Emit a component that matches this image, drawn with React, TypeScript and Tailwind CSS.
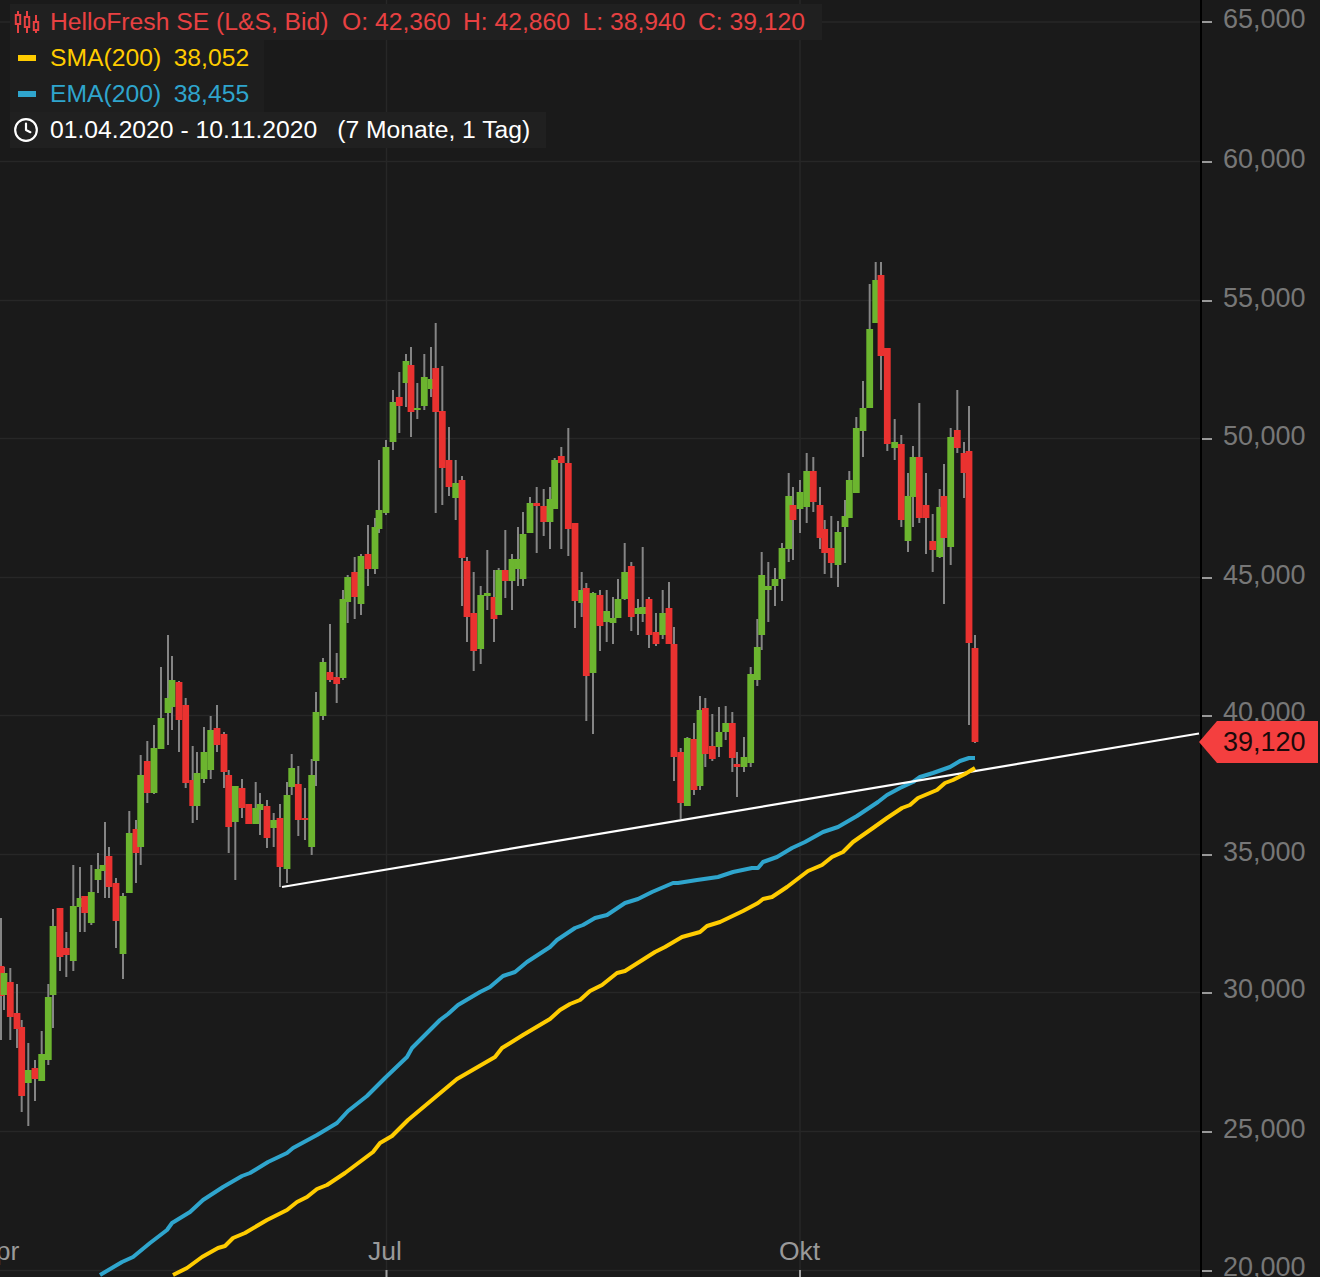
import { Clock } from "lucide-react";

type C = [number, number, number, number, number, "r" | "g", number?];

const candles: C[] = [
  [1, 918, 1040, 966, 996, "r"], [4, 967, 1010, 973, 995, "g"], [10.3, 968, 1040, 982, 1017, "r"], [17, 984, 1048, 1013, 1029, "r"],
  [21.7, 1020, 1112, 1027, 1096, "r"], [28.3, 1043, 1126, 1070, 1083, "g"], [35, 1060, 1101, 1068, 1079, "r"], [41.7, 1031, 1081, 1054, 1081, "g"],
  [48.3, 984, 1065, 997, 1060, "g"], [53, 909, 1028, 926, 995, "g"], [60, 908, 971, 908, 957, "r"], [66.3, 932, 977, 948, 955, "r"],
  [73.3, 865, 971, 906, 961, "g"], [80, 867, 932, 898, 907, "g"], [84.7, 896, 932, 896, 913, "r"], [91.3, 865, 925, 892, 923, "g"],
  [98, 853, 893, 869, 880, "g"], [103, 822, 898, 865, 871, "g", 105], [109, 847, 898, 856, 887, "r"], [116, 878, 948, 883, 921, "r"],
  [123, 893, 979, 896, 954, "g"], [129.3, 811, 893, 833, 893, "g"], [136, 820, 883, 829, 853, "r"], [140.7, 755, 865, 775, 847, "g"],
  [147.3, 741, 803, 761, 793, "r"], [154, 725, 794, 748, 793, "g"], [161, 667, 749, 718, 749, "g"], [168, 635, 745, 698, 713, "g"],
  [172, 656, 730, 680, 707, "g"], [179, 681, 752, 682, 720, "r"], [185.7, 698, 788, 705, 783, "r"], [192.7, 746, 823, 780, 806, "r"],
  [197, 752, 820, 773, 806, "g"], [204, 727, 783, 752, 779, "g"], [210.7, 716, 779, 730, 770, "g"], [217, 705, 752, 728, 745, "r"],
  [224, 732, 788, 734, 772, "r"], [228.7, 770, 853, 775, 827, "r"], [235.3, 786, 880, 786, 822, "g"], [242, 779, 818, 788, 808, "r"],
  [248.7, 804, 824, 804, 824, "r"], [255.7, 782, 824, 808, 824, "g"], [260, 793, 835, 804, 810, "g"], [267, 800, 848, 806, 838, "r"],
  [273.7, 813, 847, 820, 828, "g"], [280, 804, 887, 818, 867, "r"], [287, 782, 883, 795, 869, "g"], [291.7, 754, 795, 768, 787, "g"],
  [298.3, 766, 836, 784, 820, "r"], [305, 788, 840, 818, 820, "r"], [311.7, 759, 855, 775, 847, "g"], [316, 692, 786, 712, 761, "g"],
  [323, 658, 720, 662, 716, "g"], [330, 624, 682, 672, 680, "r"], [336.7, 653, 703, 677, 684, "r"], [343, 590, 680, 599, 678, "g"],
  [347.7, 575, 623, 577, 602, "g"], [354.7, 557, 619, 572, 597, "r"], [361, 554, 615, 556, 604, "g"], [368, 525, 586, 554, 569, "r"],
  [375, 518, 574, 527, 569, "g"], [379, 460, 533, 510, 529, "g"], [386, 440, 515, 447, 513, "g"], [393, 390, 450, 402, 442, "g"],
  [399.3, 372, 433, 397, 406, "r"], [406, 354, 407, 361, 383, "g"], [411, 347, 437, 365, 412, "r"], [417.3, 383, 419, 408, 410, "g"],
  [424.3, 354, 410, 377, 406, "g"], [431, 347, 397, 379, 389, "g"], [435.7, 323, 513, 368, 412, "r"], [442.3, 366, 505, 411, 468, "r"],
  [449, 427, 496, 460, 487, "r"], [455.7, 460, 520, 483, 498, "g"], [462, 476, 606, 480, 558, "r"], [467, 557, 642, 561, 617, "r"],
  [473.7, 572, 671, 613, 651, "r"], [480.7, 586, 664, 595, 649, "g"], [487.3, 550, 610, 593, 596, "g"], [494, 570, 642, 597, 619, "r"],
  [498.7, 568, 615, 570, 615, "g"], [505.3, 530, 598, 570, 581, "r"], [512, 554, 610, 559, 581, "g"], [518, 527, 586, 559, 569, "g"],
  [523, 512, 586, 534, 579, "g"], [530, 497, 533, 503, 533, "g"], [536.7, 487, 553, 503, 506, "r"], [543.7, 489, 536, 506, 522, "r"],
  [550, 487, 549, 499, 522, "g"], [554.7, 458, 509, 460, 509, "g"], [561.3, 447, 549, 456, 463, "r"], [568.3, 428, 556, 463, 529, "r"],
  [575, 523, 628, 523, 601, "r"], [581.7, 572, 617, 590, 603, "g"], [586.3, 583, 721, 588, 676, "r"], [593, 592, 734, 593, 673, "g"],
  [600, 590, 651, 595, 626, "r"], [606.7, 590, 642, 611, 622, "g"], [613, 597, 644, 618, 623, "g"], [618, 579, 618, 599, 618, "g"],
  [624.7, 543, 600, 572, 599, "g"], [631.3, 562, 631, 566, 617, "r"], [638, 599, 635, 608, 614, "g"], [642.7, 547, 622, 607, 614, "g"],
  [649, 597, 648, 599, 635, "r"], [656, 613, 646, 632, 644, "r"], [662.7, 590, 639, 613, 635, "g"], [669, 582, 644, 608, 644, "r"],
  [674, 627, 781, 644, 757, "r"], [680.7, 748, 819, 752, 803, "r"], [687.3, 737, 806, 738, 806, "g"], [694, 723, 795, 739, 790, "r"],
  [700, 696, 790, 710, 786, "g"], [705.3, 698, 767, 708, 754, "r"], [712.3, 714, 761, 746, 759, "r"], [719, 707, 757, 732, 747, "g"],
  [725.7, 706, 740, 723, 732, "g"], [732.3, 712, 772, 723, 758, "r"], [737, 752, 797, 764, 767, "r"], [744, 737, 772, 757, 767, "g"],
  [750.7, 667, 767, 674, 763, "g"], [757.3, 619, 686, 647, 680, "g"], [761.7, 552, 650, 575, 635, "g"], [768.3, 562, 622, 586, 590, "g"],
  [775, 568, 606, 579, 586, "g"], [782, 543, 601, 548, 579, "g"], [788.7, 473, 562, 496, 549, "g"], [793, 487, 560, 505, 520, "r"],
  [800, 480, 533, 492, 509, "g"], [806.7, 453, 523, 471, 507, "g"], [813.3, 457, 512, 471, 502, "r"], [820, 487, 549, 505, 538, "r"],
  [824.7, 520, 574, 529, 553, "r"], [831.3, 516, 578, 548, 563, "r"], [838, 521, 587, 532, 565, "g"], [845, 500, 563, 516, 527, "g"],
  [849.3, 471, 518, 480, 518, "g"], [856.3, 417, 493, 428, 493, "g"], [863, 381, 457, 408, 431, "g"], [869.7, 284, 408, 329, 408, "g"],
  [875.7, 262, 323, 280, 323, "g"], [881, 262, 390, 275, 356, "r"], [887.3, 348, 451, 348, 444, "r"], [894.7, 419, 460, 442, 448, "g"],
  [901.3, 435, 527, 444, 520, "r"], [908, 473, 552, 496, 541, "g"], [913, 446, 527, 457, 497, "g"], [919.3, 403, 523, 457, 518, "r"],
  [926, 473, 554, 505, 518, "r"], [932.7, 514, 572, 541, 550, "r"], [939.7, 489, 558, 507, 557, "g"], [944, 464, 604, 496, 538, "r"],
  [950.7, 428, 565, 437, 547, "g"], [957.3, 390, 453, 430, 448, "r"], [964, 442, 498, 453, 473, "r"], [969, 406, 725, 451, 643, "r"],
  [975, 635, 743, 648, 742, "r"],
];

const ema =
  "100,1275 122,1262 133,1257 150,1243 167,1230 172,1223 190,1212 203,1200 223,1187 242,1176 250,1173 268,1162 287,1153 293,1148 317,1135 337,1123 348,1111 367,1096 385,1078 407,1057 412,1048 440,1020 448,1014 458,1005 480,992 490,987 503,976 515,972 527,962 550,947 557,940 575,928 583,925 595,918 607,915 625,903 638,899 652,892 673,883 678,883 697,880 718,877 733,872 752,868 758,868 763,862 777,857 792,848 805,842 823,832 838,827 857,816 878,802 887,795 900,788 913,782 920,777 933,773 950,767 960,761 969,758 975,758";
const sma =
  "173,1275 187,1268 202,1257 218,1248 225,1246 233,1238 245,1233 267,1220 287,1210 297,1202 307,1197 317,1189 327,1185 345,1173 373,1152 380,1143 392,1136 408,1120 457,1079 495,1057 502,1048 523,1035 550,1019 560,1010 570,1004 580,1000 590,991 602,985 617,973 625,971 655,952 665,947 682,937 700,932 707,926 720,922 743,911 758,903 763,899 772,897 787,887 808,871 822,865 832,857 843,852 853,842 873,828 887,818 902,808 910,805 918,798 937,790 945,783 953,780 965,774 975,768";

const gridY = [22, 161.5, 300.5, 438.5, 577.5, 715.5, 854.5, 992.5, 1131.5, 1270.5];
const axis: [string, number][] = [
  ["65,000", 3], ["60,000", 3], ["55,000", 3], ["50,000", 3], ["45,000", 3], ["40,000", 4], ["35,000", 3], ["30,000", 4], ["25,000", 3], ["20,000", 4],
];

function CandleIcon() {
  return (
    <svg width="26" height="26" viewBox="0 0 26 26" fill="none" stroke="currentColor" strokeWidth="2">
      <path d="M4 2v4M4 15v9M13 2v6M13 18v6M22 6v7M22 21v3" />
      <rect x="1.8" y="6" width="4.4" height="9" />
      <rect x="10.8" y="8" width="4.4" height="10" />
      <rect x="19.8" y="13" width="4.4" height="8" />
    </svg>
  );
}

export default function App() {
  return (
    <div className="relative flex h-[1277px] w-[1320px] overflow-hidden bg-[#1a1a1a] font-['Liberation_Sans',Arial,sans-serif]">
      <div className="relative h-full w-[1200px] shrink-0 overflow-hidden">
        <svg width="1200" height="1277" viewBox="0 0 1200 1277" className="block">
          {gridY.map((y) => (
            <line key={y} x1="0" x2="1200" y1={y} y2={y} stroke="#272727" strokeWidth="1.5" />
          ))}
          <line x1="386.5" x2="386.5" y1="0" y2="1277" stroke="#272727" strokeWidth="1.5" />
          <line x1="800" x2="800" y1="0" y2="1277" stroke="#272727" strokeWidth="1.5" />
          <line x1="386.5" x2="386.5" y1="1270" y2="1277" stroke="#a0a0a0" strokeWidth="2" />
          <line x1="800" x2="800" y1="1270" y2="1277" stroke="#a0a0a0" strokeWidth="2" />
          {candles.map((c, i) => (
            <line key={i} x1={c[6] ?? c[0]} x2={c[6] ?? c[0]} y1={c[1]} y2={c[2]} stroke="#858585" strokeWidth="2" />
          ))}
          {candles.map((c, i) => (
            <rect key={i} x={c[0] - 3.4} y={c[3]} width="6.8" height={c[4] - c[3]} fill={c[5] === "r" ? "#ea3230" : "#6cb52f"} />
          ))}
          <polyline points={ema} fill="none" stroke="#2fa5cd" strokeWidth="4" strokeLinejoin="round" />
          <line x1="282" y1="887" x2="1199" y2="733.5" stroke="#ffffff" strokeWidth="2.2" />
          <polyline points={sma} fill="none" stroke="#ffcc00" strokeWidth="4" strokeLinejoin="round" />
        </svg>

        <div className="absolute left-[10px] top-[4px] flex flex-col items-start text-[24.7px] leading-[36px]">
          <div className="flex w-[812px] items-center bg-[#202020] text-[#e84142]">
            <span className="flex w-[40px] justify-center pr-[6px]"><CandleIcon /></span>
            <span className="mr-[13.5px]">HelloFresh SE (L&amp;S, Bid)</span>
            <span className="mr-[12.5px]">O: 42,360</span>
            <span className="mr-[12.5px]">H: 42,860</span>
            <span className="mr-[12.5px]">L: 38,940</span>
            <span>C: 39,120</span>
          </div>
          <div className="flex w-[254px] items-center bg-[#1e1e1e] text-[#ffcc00]">
            <span className="flex w-[40px] justify-end pr-[14px]"><span className="h-[6px] w-[18px] bg-[#ffcc00]" /></span>
            <span className="mr-[12.5px]">SMA(200)</span>
            <span>38,052</span>
          </div>
          <div className="flex w-[254px] items-center bg-[#1e1e1e] text-[#2fa5cd]">
            <span className="flex w-[40px] justify-end pr-[14px]"><span className="h-[6px] w-[18px] bg-[#2fa5cd]" /></span>
            <span className="mr-[12.5px]">EMA(200)</span>
            <span>38,455</span>
          </div>
          <div className="flex w-[536px] items-center bg-[#202020] text-white">
            <span className="flex w-[40px] justify-start pl-[3px]"><Clock size={26} strokeWidth={2} /></span>
            <span className="mr-[20px]">01.04.2020 - 10.11.2020</span>
            <span>(7 Monate, 1 Tag)</span>
          </div>
        </div>

        <span className="absolute left-[-22px] top-[1236px] text-[26.5px] leading-[30px] text-[#999999]">Apr</span>
        <span className="absolute left-[368px] top-[1236px] text-[26.5px] leading-[30px] text-[#999999]">Jul</span>
        <span className="absolute left-[779px] top-[1236px] text-[26.5px] leading-[30px] text-[#999999]">Okt</span>
      </div>

      <div className="relative h-full w-[120px] border-l-2 border-black">
        {axis.map(([t, up], i) => (
          <div key={t} className="absolute left-0 flex h-[30px] items-center" style={{ top: gridY[i] - 15 }}>
            <span className="h-[2px] w-[10px] bg-[#999999]" />
            <span className="ml-[11px] text-[27px] leading-[30px] text-[#777777]" style={{ transform: `translateY(${-up}px)` }}>{t}</span>
          </div>
        ))}
      </div>

      <div className="absolute left-[1199px] top-[721px] flex h-[42px] w-[119px] items-center bg-[#f43f3f] pl-[24px] text-[27px] leading-[30px] text-[#1a0a0a] [clip-path:polygon(0_50%,18px_0,100%_0,100%_100%,18px_100%)]">
        39,120
      </div>
    </div>
  );
}
